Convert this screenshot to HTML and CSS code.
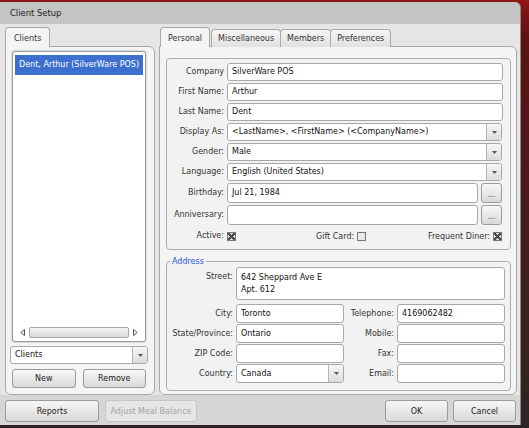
FILE: index.html
```html
<!DOCTYPE html>
<html lang="en">
<head>
    <meta charset="UTF-8">
    <title>Client Setup</title>
    <link rel="stylesheet" href="styles.css">
</head>
<body>
    <div class="window">
        <div class="titlebar">Client Setup</div>

        <div class="main">
            <!-- Clients list -->
            <section class="side">
                <div class="tabs">
                    <div class="tab active">Clients</div>
                </div>
                <div class="panel side-panel">
                    <div class="listbox">
                        <div class="list-items">
                            <div class="list-item selected">Dent, Arthur (SilverWare POS)</div>
                        </div>
                        <div class="hscroll">
                            <svg class="arrow" width="5" height="7" viewBox="0 0 5 7"><polygon points="4.5,0.5 4.5,6.5 0.8,3.5" fill="none" stroke="#555" stroke-width="1"/></svg>
                            <div class="thumb"></div>
                            <svg class="arrow" width="5" height="7" viewBox="0 0 5 7"><polygon points="0.5,0.5 0.5,6.5 4.2,3.5" fill="none" stroke="#555" stroke-width="1"/></svg>
                        </div>
                    </div>
                    <div class="field combo">
                        <span class="value">Clients</span>
                        <span class="drop"><svg width="5" height="3" viewBox="0 0 5 3"><polygon points="0,0 5,0 2.5,3" fill="#555"/></svg></span>
                    </div>
                    <div class="btn-row">
                        <button class="btn">New</button>
                        <button class="btn">Remove</button>
                    </div>
                </div>
            </section>

            <!-- Client details -->
            <section class="details">
                <div class="tabs">
                    <div class="tab active">Personal</div>
                    <div class="tab">Miscellaneous</div>
                    <div class="tab">Members</div>
                    <div class="tab">Preferences</div>
                </div>
                <div class="panel details-panel">
                    <div class="group personal">
                        <label>Company</label>
                        <div class="field">SilverWare POS</div>

                        <label>First Name:</label>
                        <div class="field">Arthur</div>

                        <label>Last Name:</label>
                        <div class="field">Dent</div>

                        <label>Display As:</label>
                        <div class="field combo">
                            <span class="value">&lt;LastName&gt;, &lt;FirstName&gt; (&lt;CompanyName&gt;)</span>
                            <span class="drop"><svg width="5" height="3" viewBox="0 0 5 3"><polygon points="0,0 5,0 2.5,3" fill="#555"/></svg></span>
                        </div>

                        <label>Gender:</label>
                        <div class="field combo">
                            <span class="value">Male</span>
                            <span class="drop"><svg width="5" height="3" viewBox="0 0 5 3"><polygon points="0,0 5,0 2.5,3" fill="#555"/></svg></span>
                        </div>

                        <label>Language:</label>
                        <div class="field combo">
                            <span class="value">English (United States)</span>
                            <span class="drop"><svg width="5" height="3" viewBox="0 0 5 3"><polygon points="0,0 5,0 2.5,3" fill="#555"/></svg></span>
                        </div>

                        <label class="tall-label">Birthday:</label>
                        <div class="picker">
                            <div class="field tall">Jul 21, 1984</div>
                            <button class="btn dots">...</button>
                        </div>

                        <label class="tall-label">Anniversary:</label>
                        <div class="picker">
                            <div class="field tall"></div>
                            <button class="btn dots">...</button>
                        </div>

                        <label>Active:</label>
                        <div class="checks">
                            <span class="check checked"></span>
                            <span class="check-item gift">Gift Card: <span class="check"></span></span>
                            <span class="check-item diner">Frequent Diner: <span class="check checked"></span></span>
                        </div>
                    </div>

                    <fieldset class="group address">
                        <legend>Address</legend>
                        <div class="address-grid">
                            <label class="street-label">Street:</label>
                            <div class="field street">642 Sheppard Ave E<br>Apt. 612</div>

                            <label>City:</label>
                            <div class="field">Toronto</div>
                            <label>Telephone:</label>
                            <div class="field">4169062482</div>

                            <label>State/Province:</label>
                            <div class="field">Ontario</div>
                            <label>Mobile:</label>
                            <div class="field"></div>

                            <label>ZIP Code:</label>
                            <div class="field"></div>
                            <label>Fax:</label>
                            <div class="field"></div>

                            <label>Country:</label>
                            <div class="field combo">
                                <span class="value">Canada</span>
                                <span class="drop"><svg width="5" height="3" viewBox="0 0 5 3"><polygon points="0,0 5,0 2.5,3" fill="#555"/></svg></span>
                            </div>
                            <label>Email:</label>
                            <div class="field"></div>
                        </div>
                    </fieldset>
                </div>
            </section>
        </div>

        <div class="footer">
            <button class="btn reports">Reports</button>
            <button class="btn meal" disabled>Adjust Meal Balance</button>
            <span class="spacer"></span>
            <button class="btn ok">OK</button>
            <button class="btn cancel">Cancel</button>
        </div>
    </div>
</body>
</html>
```

FILE: styles.css
```css
html, body {
    margin: 0;
    height: 100%;
}

body {
    background: linear-gradient(to bottom, #8c1616 0, #5a1212 40px, #2e2424 100%);
    font-family: 'DejaVu Sans', 'Liberation Sans', sans-serif;
    font-size: 8px;
    color: #222;
    overflow: hidden;
}

.window {
    width: 521px;
    height: 423px;
    margin-top: 2px;
    background: #e5e5e5;
    border-radius: 0 6px 0 0;
    border-right: 1px solid #8a8a8a;
    box-sizing: border-box;
    display: flex;
    flex-direction: column;
    overflow: hidden;
}

.titlebar {
    height: 22px;
    line-height: 22px;
    padding-left: 10px;
    background: #c4c4c4;
    color: #222;
    font-size: 8.4px;
    flex-shrink: 0;
}

.main {
    display: flex;
    gap: 4px;
    padding: 4px 3px 0 5px;
    height: 371px;
    box-sizing: border-box;
}

/* Tabs */
.tabs {
    display: flex;
    align-items: flex-end;
    height: 19px;
    padding-left: 1px;
    position: relative;
    z-index: 1;
    margin-bottom: -1px;
}

.tab {
    height: 17px;
    line-height: 17px;
    padding: 0 6px;
    border: 1px solid #a9a9a9;
    border-bottom: none;
    border-radius: 4px 4px 0 0;
    background: linear-gradient(#f6f6f6, #e0e0e0);
    color: #333;
    margin-right: -1px;
}

.tab.active {
    height: 19px;
    line-height: 21px;
    padding: 0 7px;
    background: #f4f4f4;
    margin-right: 1px;
}

.side .tab {
    padding: 0 8px;
    margin-left: -1px;
}

.panel {
    flex: 1;
    background: #f4f4f4;
    border: 1px solid #a9a9a9;
    border-radius: 0 6px 6px 6px;
    display: flex;
    flex-direction: column;
    min-height: 0;
}

/* Left side */
.side {
    width: 150px;
    display: flex;
    flex-direction: column;
}

.side-panel {
    padding: 4px 6px 6px 4px;
}

.listbox {
    flex: 1;
    margin: 0 2px;
    background: #fff;
    border: 1px solid #9c9c9c;
    border-radius: 3px;
    box-shadow: 0 0 0 1px #dadada;
    display: flex;
    flex-direction: column;
    padding: 3px 2px 2px 2px;
}

.list-items {
    flex: 1;
}

.list-item {
    height: 20px;
    line-height: 20px;
    padding-left: 4px;
    white-space: nowrap;
    overflow: hidden;
}

.list-item.selected {
    background: #3d6fce;
    color: #fff;
}

.hscroll {
    height: 13px;
    display: flex;
    align-items: center;
    gap: 4px;
    padding: 0 5px;
}

.thumb {
    flex: 1;
    height: 11px;
    border: 1px solid #a6a6a6;
    border-radius: 2px;
    background: linear-gradient(#f4f4f4, #d8d8d8);
    box-sizing: border-box;
}

.combo {
    display: flex;
    padding-right: 0;
}

.combo .value {
    flex: 1;
    white-space: nowrap;
    overflow: hidden;
}

.combo .drop {
    width: 14px;
    border-left: 1px solid #b5b5b5;
    background: linear-gradient(#f6f6f6, #dcdcdc);
    border-radius: 0 2px 2px 0;
    display: flex;
    align-items: center;
    justify-content: center;
}

.side-panel .combo {
    margin-top: 4px;
}

.btn-row {
    display: flex;
    gap: 7px;
    padding: 0 2px;
    margin-top: 5px;
}

.btn-row .btn {
    flex: 1;
    height: 19px;
}

/* Buttons */
.btn {
    font: inherit;
    color: #222;
    border: 1px solid #9b9b9b;
    border-radius: 3px;
    background: linear-gradient(#f7f7f7, #d9d9d9);
    padding: 0;
    height: 22px;
}

.btn:disabled {
    color: #a4a4a4;
    border-color: #c6c6c6;
    background: #e6e6e6;
}

/* Details */
.details {
    flex: 1;
    display: flex;
    flex-direction: column;
}

.details-panel {
    padding: 11px 5px 3px 6px;
}

.group {
    border: 1px solid #adadad;
    border-radius: 4px;
    background: #f2f2f2;
}

label {
    text-align: right;
    color: #333;
    white-space: nowrap;
    line-height: 18px;
}

.field {
    height: 18px;
    line-height: 16px;
    box-sizing: border-box;
    border: 1px solid #a8a8a8;
    border-radius: 3px;
    background: #fff;
    padding: 0 0 0 4px;
    color: #111;
    white-space: nowrap;
    overflow: hidden;
}

.personal {
    display: grid;
    grid-template-columns: 57px 1fr;
    column-gap: 3px;
    row-gap: 2px;
    padding: 4px 7px 4px 0;
}

.personal .combo {
    margin-right: 1px;
}

.picker {
    display: flex;
    gap: 3px;
}

.picker .field {
    flex: 1;
}

.field.tall {
    height: 20px;
    line-height: 18px;
}

.tall-label {
    line-height: 20px;
}

.dots {
    width: 21px;
    height: 20px;
    line-height: 22px;
    margin-right: 1px;
    color: #444;
}

.checks {
    display: flex;
    align-items: center;
    height: 18px;
    color: #333;
}

.check-item {
    display: flex;
    align-items: center;
    gap: 3px;
}

.gift {
    margin-left: 80px;
}

.diner {
    margin-left: auto;
    margin-right: 1px;
}

.check {
    width: 9px;
    height: 9px;
    box-sizing: border-box;
    border: 1px solid #777;
    background: #e9e9e9;
    display: inline-block;
}

.check.checked {
    background:
        linear-gradient(45deg, transparent 42%, #4a4a4a 42%, #4a4a4a 58%, transparent 58%),
        linear-gradient(-45deg, transparent 42%, #4a4a4a 42%, #4a4a4a 58%, transparent 58%),
        #dcdcdc;
}

/* Address */
.address {
    margin: 6px 0 0 0;
    padding: 0 5px 5px 3px;
    flex: 1;
    min-width: 0;
}

.address legend {
    color: #1f59df;
    padding: 0 2px;
    line-height: 11px;
}

.address-grid {
    display: grid;
    grid-template-columns: 63px 108px 47px 1fr;
    column-gap: 3px;
    row-gap: 1px;
}

.address-grid .field {
    height: 19px;
    line-height: 17px;
}

.address-grid label {
    line-height: 19px;
}

.address-grid .street {
    grid-column: 2 / 5;
    height: 33px;
    line-height: 12px;
    padding-top: 4px;
    margin-bottom: 3px;
}

.address-grid .street-label {
    line-height: 20px;
}

/* Footer */
.footer {
    flex: 1;
    display: flex;
    align-items: flex-start;
    gap: 5px;
    padding: 5px 4px 0 5px;
    background: #d6d6d6;
}

.reports {
    width: 94px;
}

.meal {
    width: 92px;
    margin-left: 1px;
}

.spacer {
    flex: 1;
}

.ok,
.cancel {
    width: 63px;
}
```
